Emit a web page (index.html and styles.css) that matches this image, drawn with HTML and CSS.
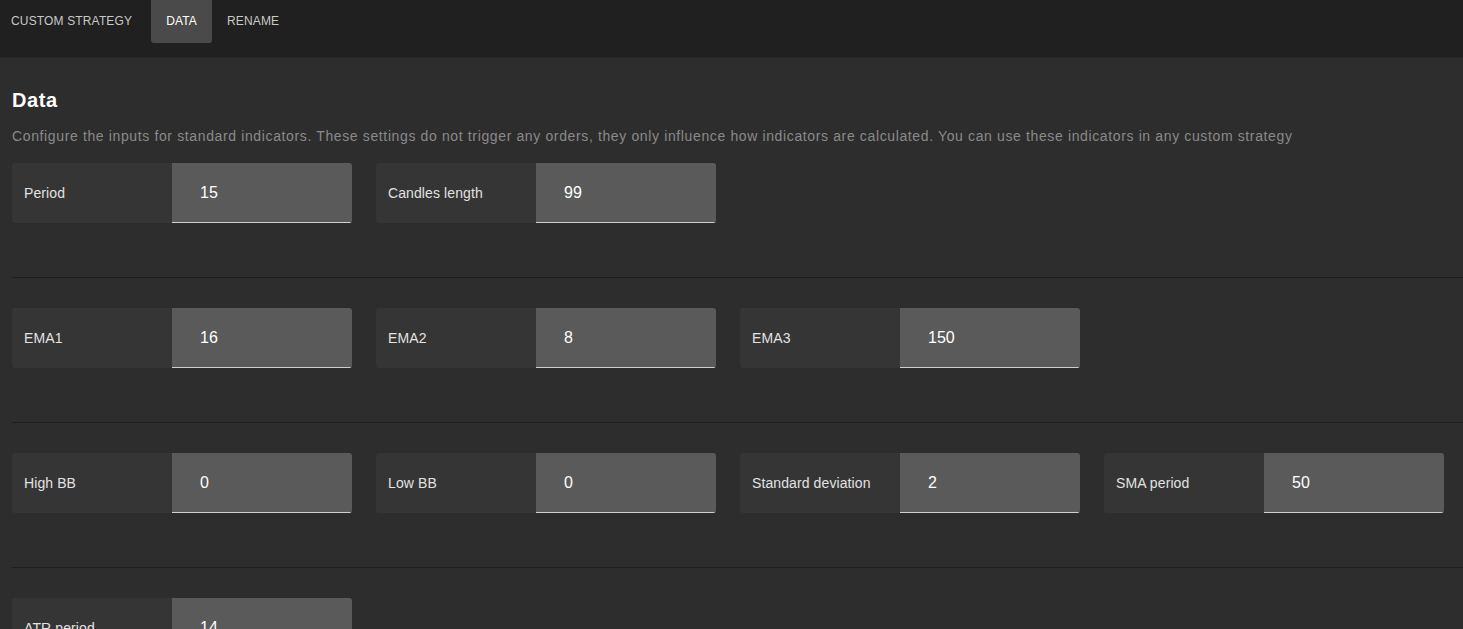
FILE: index.html
```html
<!DOCTYPE html>
<html>
<head>
<meta charset="utf-8">
<link rel="stylesheet" href="styles.css">
</head>
<body>
<nav class="topbar">
  <div class="tab">CUSTOM STRATEGY</div>
  <div class="tab active">DATA</div>
  <div class="tab">RENAME</div>
</nav>
<main class="content">
  <h1 class="title">Data</h1>
  <p class="desc">Configure the inputs for standard indicators. These settings do not trigger any orders, they only influence how indicators are calculated. You can use these indicators in any custom strategy</p>
  <section class="row">
    <div class="field"><span class="label">Period</span><span class="value">15</span></div>
    <div class="field"><span class="label">Candles length</span><span class="value">99</span></div>
  </section>
  <section class="row">
    <div class="field"><span class="label">EMA1</span><span class="value">16</span></div>
    <div class="field"><span class="label">EMA2</span><span class="value">8</span></div>
    <div class="field"><span class="label">EMA3</span><span class="value">150</span></div>
  </section>
  <section class="row">
    <div class="field"><span class="label">High BB</span><span class="value">0</span></div>
    <div class="field"><span class="label">Low BB</span><span class="value">0</span></div>
    <div class="field"><span class="label">Standard deviation</span><span class="value">2</span></div>
    <div class="field"><span class="label">SMA period</span><span class="value">50</span></div>
  </section>
  <section class="row">
    <div class="field"><span class="label">ATR period</span><span class="value">14</span></div>
  </section>
</main>
</body>
</html>
```
FILE: styles.css
```css
html, body {
  margin: 0;
  padding: 0;
  background: #2d2d2d;
  font-family: "Liberation Sans", Arial, sans-serif;
  overflow: hidden;
  height: 629px;
}
.topbar {
  display: flex;
  height: 57px;
  background: #202020;
  border-bottom: 1px solid #272727;
  align-items: flex-start;
}
.tab {
  height: 43px;
  line-height: 42px;
  padding: 0 15px;
  font-size: 12px;
  color: #c8c8c8;
  letter-spacing: 0.15px;
  border-radius: 0 0 3px 3px;
}
.tab:first-child {
  padding-left: 11px;
  padding-right: 19px;
}
.tab.active {
  background: #4a4a4a;
  color: #ffffff;
}
.content {
  padding-left: 12px;
}
.title {
  margin: 30px 0 0 0;
  font-size: 20px;
  line-height: 24px;
  font-weight: bold;
  color: #ffffff;
  letter-spacing: 0.6px;
}
.desc {
  margin: 14px 0 0 0;
  font-size: 14px;
  line-height: 20px;
  color: #8a8a8a;
  letter-spacing: 0.63px;
  white-space: nowrap;
}
.row {
  display: flex;
  gap: 24px;
  padding: 30px 0 54px 0;
  border-top: 1px solid #1f1f1f;
}
.row:first-of-type {
  border-top: none;
  padding-top: 17px;
}
.field {
  display: flex;
  width: 340px;
  height: 60px;
  border-radius: 3px;
  overflow: hidden;
  background: #353535;
}
.label {
  width: 148px;
  padding-left: 12px;
  display: flex;
  align-items: center;
  font-size: 14px;
  color: #e2e2e2;
  letter-spacing: 0.1px;
}
.value {
  padding-left: 28px;
  display: flex;
  align-items: center;
  font-size: 16px;
  color: #ffffff;
  background: #5a5a5a;
  border-bottom: 1px solid #d0d0d0;
  box-sizing: border-box;
  width: 180px;
}
```
